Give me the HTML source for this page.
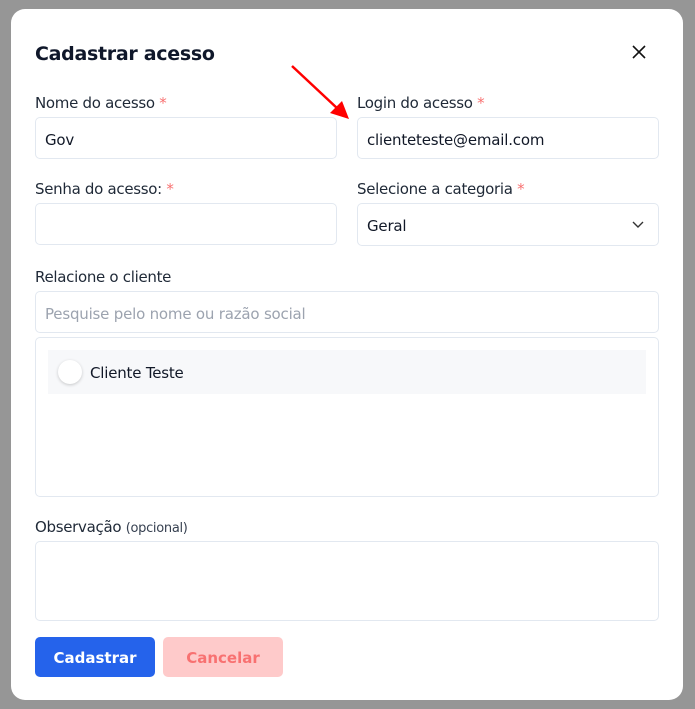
<!DOCTYPE html>
<html><head><meta charset="utf-8"><style>
*{box-sizing:border-box;margin:0;padding:0}
body{width:695px;height:709px;background:#969696;font-family:"DejaVu Sans","Liberation Sans",sans-serif;position:relative;overflow:hidden;color:#111827}
.m{position:absolute;left:11px;top:9px;width:672px;height:691px;background:#fff;border-radius:14px}
.t{position:absolute;left:24px;top:34px;font-size:19px;font-weight:bold;color:#0f172a;letter-spacing:-0.3px}
.x{position:absolute;left:620px;top:35px}
.l{position:absolute;font-size:15px;color:#1f2937;letter-spacing:-0.3px}
.l span{color:#f87171}
.i{position:absolute;border:1px solid #e2e8f0;border-radius:5px;height:42px;font-size:15px;padding-left:9px;line-height:44px;letter-spacing:-0.2px}
.b{position:absolute;top:628px;height:40px;border-radius:5px;font-size:15px;font-weight:bold;text-align:center;line-height:43px}
</style></head><body>
<div class="m">
<div class="t">Cadastrar acesso</div>
<svg class="x" width="16" height="16" viewBox="0 0 16 16"><path d="M2 2L14 14M14 2L2 14" stroke="#111" stroke-width="1.6"/></svg>
<div class="l" style="left:24px;top:85px">Nome do acesso <span>*</span></div>
<div class="l" style="left:346px;top:85px">Login do acesso <span>*</span></div>
<div class="i" style="left:24px;top:108px;width:302px">Gov</div>
<div class="i" style="left:346px;top:108px;width:302px">clienteteste@email.com</div>
<div class="l" style="left:24px;top:171px">Senha do acesso: <span>*</span></div>
<div class="l" style="left:346px;top:171px">Selecione a categoria <span>*</span></div>
<div class="i" style="left:24px;top:194px;width:302px"></div>
<div class="i" style="left:346px;top:194px;width:302px;height:43px">Geral
<svg style="position:absolute;right:14px;top:17px" width="12" height="8" viewBox="0 0 12 8"><path d="M1 1L6 6L11 1" fill="none" stroke="#333" stroke-width="1.4"/></svg></div>
<div class="l" style="left:24px;top:259px">Relacione o cliente</div>
<div class="i" style="left:24px;top:282px;width:624px;color:#9ca3af">Pesquise pelo nome ou razão social</div>
<div style="position:absolute;left:24px;top:328px;width:624px;height:160px;border:1px solid #e2e8f0;border-radius:5px">
<div style="position:absolute;left:12px;top:12px;width:598px;height:44px;background:#f7f8fa">
<div style="position:absolute;left:10px;top:10px;width:24px;height:24px;border-radius:50%;background:#fff;box-shadow:0 1px 3px rgba(0,0,0,.2)"></div>
<div style="position:absolute;left:42px;top:14px;font-size:15px;letter-spacing:-0.2px">Cliente Teste</div></div></div>
<div class="l" style="left:24px;top:509px">Observação <small style="font-size:13px;color:#374151">(opcional)</small></div>
<div class="i" style="left:24px;top:532px;width:624px;height:80px"></div>
<div class="b" style="left:24px;width:120px;background:#2563eb;color:#fff">Cadastrar</div>
<div class="b" style="left:152px;width:120px;background:#fecaca;color:#f87171">Cancelar</div>
</div>
<svg style="position:absolute;left:0;top:0" width="695" height="709"><line x1="292" y1="66" x2="338" y2="109" stroke="#f00" stroke-width="2.5"/><polygon points="349,119 330,113 342,101" fill="#f00"/></svg>
</body></html>
